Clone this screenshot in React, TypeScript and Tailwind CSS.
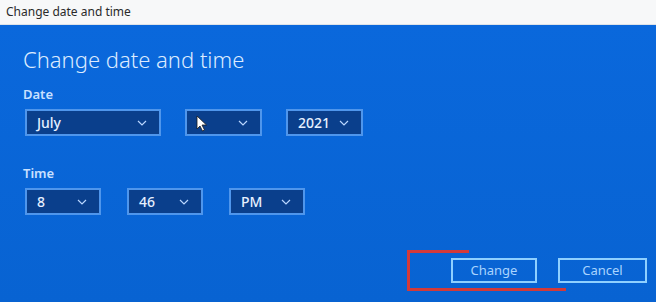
import React from "react";

const Chevron = () => (
  <svg width="10" height="6" viewBox="0 0 10 6" className="shrink-0">
    <path d="M1 1 L5 5 L9 1" fill="none" stroke="#b9d6ff" strokeWidth="1.2" />
  </svg>
);

function Select({ w, h, value, children }: { w: string; h: string; value?: string; children?: React.ReactNode }) {
  return (
    <div
      className={`${w} ${h} relative flex items-center justify-between border-2 border-[#4f96ec] bg-[#0a3f8c] pl-[10px] pr-[12px]`}
    >
      <span className="text-[14px] font-medium text-[#e6f0ff]">{value}</span>
      {children}
      <Chevron />
    </div>
  );
}

export default function App() {
  return (
    <div
      className="w-[656px] h-[302px] flex flex-col overflow-hidden"
      style={{ fontFamily: '"Noto Sans", "Open Sans", sans-serif' }}
    >
      <div className="h-[25px] shrink-0 bg-[#f7f8f9] border-b border-[#dfe3e8] flex items-center pl-[6px]">
        <span className="text-[12px] text-[#2a2a2a]">Change date and time</span>
      </div>
      <div className="relative flex-1 bg-gradient-to-b from-[#0a68dc] to-[#0863d2] flex flex-col pl-[23px]">
        <div className="mt-[19px] text-[22px] font-light leading-[30px] text-[#dcebff]">Change date and time</div>
        <div className="mt-[12px] text-[13px] font-semibold leading-[16px] text-[#c9e0ff]">Date</div>
        <div className="mt-[7px] ml-[2px] flex gap-[24px]">
          <Select w="w-[136px]" h="h-[27px]" value="July" />
          <Select w="w-[77px]" h="h-[27px]">
            <svg width="12" height="17" viewBox="0 0 12 17" className="absolute left-[9px] top-[4px]">
              <path d="M1 1 L1 14 L4 11 L6.5 16 L8.5 15 L6 10 L10.5 10 Z" fill="#ffffff" stroke="#1a1a1a" strokeWidth="0.8" />
            </svg>
          </Select>
          <Select w="w-[77px]" h="h-[27px]" value="2021" />
        </div>
        <div className="mt-[29px] text-[13px] font-semibold leading-[16px] text-[#c9e0ff]">Time</div>
        <div className="mt-[7px] ml-[2px] flex gap-[26px]">
          <Select w="w-[76px]" h="h-[27px]" value="8" />
          <Select w="w-[76px]" h="h-[27px]" value="46" />
          <Select w="w-[76px]" h="h-[27px]" value="PM" />
        </div>
        <div className="mt-auto mb-[19px] flex justify-end gap-[21px] pr-[9px]">
          <div className="w-[86px] h-[25px] border-2 border-[#8fd0ff] flex items-center justify-center text-[13px] text-[#a9d4ff]">
            Change
          </div>
          <div className="w-[89px] h-[25px] border-2 border-[#8fd0ff] flex items-center justify-center text-[13px] text-[#a9d4ff]">
            Cancel
          </div>
        </div>
        <div className="absolute left-[407px] top-[225px] w-[62px] h-[3px] bg-[#d23a3a]" />
        <div className="absolute left-[407px] top-[225px] w-[3px] h-[40px] bg-[#d23a3a]" />
        <div className="absolute left-[407px] top-[263px] w-[159px] h-[3px] bg-[#d23a3a]" />
      </div>
    </div>
  );
}
